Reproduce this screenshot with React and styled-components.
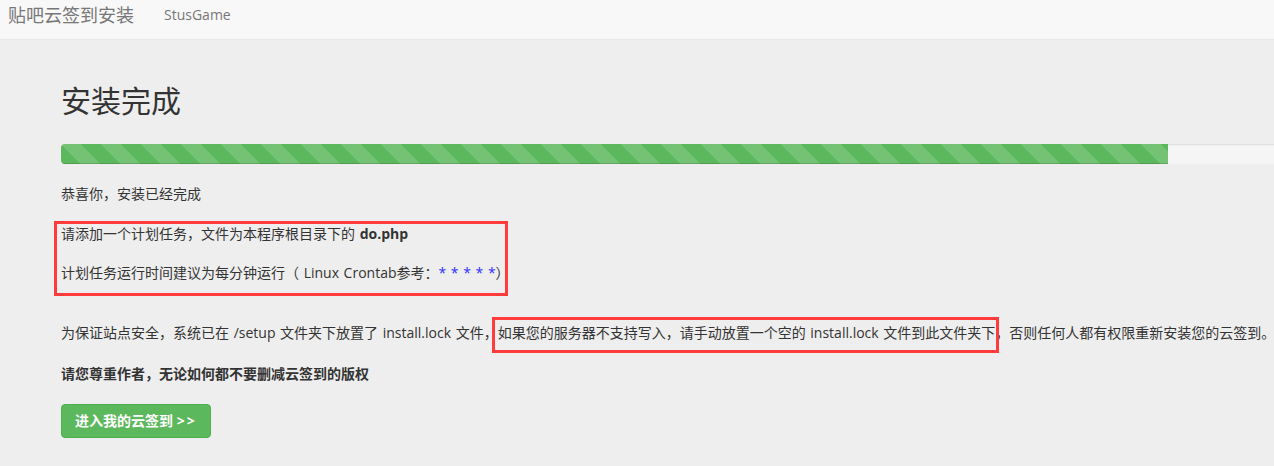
import React from 'react';
import styled, { createGlobalStyle } from 'styled-components';

const GlobalStyle = createGlobalStyle`
  html, body {
    margin: 0;
    padding: 0;
    background: #eeeeee;
    overflow: hidden;
  }
  body {
    font-family: "Open Sans", "Noto Sans CJK SC", sans-serif;
    font-size: 14px;
    line-height: 20px;
    color: #333;
  }
`;

const Navbar = styled.div`
  display: flex;
  align-items: flex-start;
  height: 40px;
  box-sizing: border-box;
  background: #f8f8f8;
  border-bottom: 1px solid #e7e7e7;
  padding: 5px 0 0 8px;
`;

const Brand = styled.a`
  font-size: 18px;
  line-height: 20px;
  color: #777;
  text-decoration: none;
  padding-right: 15px;
`;

const NavLink = styled.a`
  font-size: 14px;
  line-height: 20px;
  color: #777;
  text-decoration: none;
  padding: 0 15px;
`;

const Main = styled.div`
  padding: 0 0 40px 61px;
`;

const Title = styled.h2`
  margin: 44px 0 0;
  font-size: 30px;
  font-weight: 400;
  line-height: 33px;
  color: #333;
`;

const Progress = styled.div`
  margin-top: 27px;
  width: 1240px;
  height: 20px;
  background: #f5f5f5;
  border-radius: 4px;
  box-shadow: inset 0 1px 2px rgba(0, 0, 0, 0.1);
  overflow: hidden;
`;

const Bar = styled.div`
  height: 100%;
  width: ${({ $width }) => $width}px;
  background-color: #5cb85c;
  background-image: linear-gradient(
    45deg,
    rgba(255, 255, 255, 0.15) 25%,
    transparent 25%,
    transparent 50%,
    rgba(255, 255, 255, 0.15) 50%,
    rgba(255, 255, 255, 0.15) 75%,
    transparent 75%,
    transparent
  );
  background-size: 40px 40px;
  box-shadow: inset 0 -1px 0 rgba(0, 0, 0, 0.15);
`;

const Text = styled.p`
  margin: ${({ $top }) => $top || 0}px 0 0;
  font-weight: ${({ $bold }) => ($bold ? 700 : 400)};
  white-space: nowrap;
  word-spacing: 1px;
`;

const Marked = styled.div`
  margin: 17px 0 0 -7px;
  width: 454px;
  box-sizing: border-box;
  border: 3px solid #ff3b3b;
  padding: 0 0 10px 4px;
`;

// red annotation frame drawn over part of a sentence
const Highlight = styled.span`
  position: relative;

  &::after {
    content: '';
    position: absolute;
    left: -6px;
    right: -4px;
    top: -6px;
    bottom: -11px;
    border: 3px solid #ff3b3b;
    pointer-events: none;
  }
`;

const Stars = styled.span`
  color: #2f2fff;
`;

const Button = styled.a`
  display: inline-block;
  box-sizing: border-box;
  height: 34px;
  margin-top: 20px;
  padding: 6px 13px;
  font-size: 14px;
  font-weight: 700;
  line-height: 20px;
  color: #fff;
  background: #5cb85c;
  border: 1px solid #4cae4c;
  border-radius: 4px;
  text-decoration: none;
`;

const Arrows = styled.span`
  letter-spacing: 2px;
`;

export default function App() {
  return (
    <>
      <GlobalStyle />
      <Navbar>
        <Brand href="#">贴吧云签到安装</Brand>
        <NavLink href="#">StusGame</NavLink>
      </Navbar>
      <Main>
        <Title>安装完成</Title>
        <Progress>
          <Bar $width={1107} />
        </Progress>
        <Text $top={20}>恭喜你，安装已经完成</Text>
        <Marked>
          <Text>
            请添加一个计划任务，文件为本程序根目录下的 <b>do.php</b>
          </Text>
          <Text $top={19}>
            计划任务运行时间建议为每分钟运行（ Linux Crontab参考：<Stars>* * * * *</Stars>）
          </Text>
        </Marked>
        <Text $top={27}>
          为保证站点安全，系统已在 /setup 文件夹下放置了 install.lock 文件，
          <Highlight>如果您的服务器不支持写入，请手动放置一个空的 install.lock 文件到此文件夹下</Highlight>
          ，否则任何人都有权限重新安装您的云签到。
        </Text>
        <Text $top={21} $bold>
          请您尊重作者，无论如何都不要删减云签到的版权
        </Text>
        <Button href="#">进入我的云签到 <Arrows>&gt;&gt;</Arrows></Button>
      </Main>
    </>
  );
}
